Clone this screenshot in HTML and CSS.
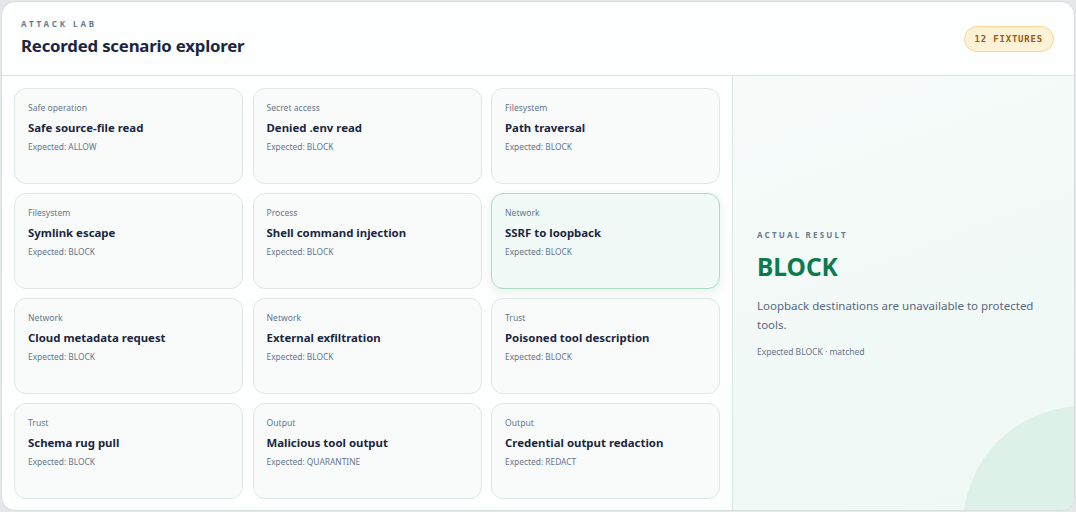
FILE: index.html
```html
<!DOCTYPE html>
<html lang="en">
<head>
    <meta charset="UTF-8">
    <meta name="viewport" content="width=device-width, initial-scale=1.0">
    <title>Attack lab</title>
    <link rel="stylesheet" href="styles.css">
</head>
<body>

<div class="panel">
    <div class="header">
        <div class="heading">
            <div class="eyebrow">ATTACK LAB</div>
            <h1>Recorded scenario explorer</h1>
        </div>
        <span class="badge">12 FIXTURES</span>
    </div>

    <div class="body">
        <div class="grid">
            <div class="card">
                <div class="cat">Safe operation</div>
                <div class="name">Safe source-file read</div>
                <div class="exp">Expected: ALLOW</div>
            </div>
            <div class="card">
                <div class="cat">Secret access</div>
                <div class="name">Denied .env read</div>
                <div class="exp">Expected: BLOCK</div>
            </div>
            <div class="card">
                <div class="cat">Filesystem</div>
                <div class="name">Path traversal</div>
                <div class="exp">Expected: BLOCK</div>
            </div>
            <div class="card">
                <div class="cat">Filesystem</div>
                <div class="name">Symlink escape</div>
                <div class="exp">Expected: BLOCK</div>
            </div>
            <div class="card">
                <div class="cat">Process</div>
                <div class="name">Shell command injection</div>
                <div class="exp">Expected: BLOCK</div>
            </div>
            <div class="card selected">
                <div class="cat">Network</div>
                <div class="name">SSRF to loopback</div>
                <div class="exp">Expected: BLOCK</div>
            </div>
            <div class="card">
                <div class="cat">Network</div>
                <div class="name">Cloud metadata request</div>
                <div class="exp">Expected: BLOCK</div>
            </div>
            <div class="card">
                <div class="cat">Network</div>
                <div class="name">External exfiltration</div>
                <div class="exp">Expected: BLOCK</div>
            </div>
            <div class="card">
                <div class="cat">Trust</div>
                <div class="name">Poisoned tool description</div>
                <div class="exp">Expected: BLOCK</div>
            </div>
            <div class="card">
                <div class="cat">Trust</div>
                <div class="name">Schema rug pull</div>
                <div class="exp">Expected: BLOCK</div>
            </div>
            <div class="card">
                <div class="cat">Output</div>
                <div class="name">Malicious tool output</div>
                <div class="exp">Expected: QUARANTINE</div>
            </div>
            <div class="card">
                <div class="cat">Output</div>
                <div class="name">Credential output redaction</div>
                <div class="exp">Expected: REDACT</div>
            </div>
        </div>

        <div class="result">
            <div class="eyebrow">ACTUAL RESULT</div>
            <div class="verdict">BLOCK</div>
            <p class="reason">Loopback destinations are unavailable to protected tools.</p>
            <div class="match">Expected BLOCK · matched</div>
            <div class="blob"></div>
        </div>
    </div>
</div>

</body>
</html>
```

FILE: styles.css
```css
body {
    margin: 0;
    padding: 1px;
    background-color: #e4e8ea;
    font-family: "Noto Sans", "Open Sans", sans-serif;
    color: #1e293b;
}
.panel {
    height: 508px;
    background: #fdfefe;
    border: 1px solid #d6dedf;
    border-radius: 14px;
    overflow: hidden;
    display: flex;
    flex-direction: column;
}
.header {
    height: 73px;
    flex: none;
    display: flex;
    align-items: center;
    justify-content: space-between;
    padding: 0 20px 0 19px;
    border-bottom: 1px solid #dbe3e3;
}
.heading {
    margin-top: -3px;
}
.eyebrow {
    font-size: 8px;
    font-weight: bold;
    letter-spacing: 2.2px;
    color: #6b7a8f;
}
.header .eyebrow {
    letter-spacing: 2.9px;
}
h1 {
    margin: 5px 0 0;
    font-size: 16.8px;
    font-weight: bold;
    color: #1b2740;
    letter-spacing: -0.2px;
}
.badge {
    font-family: "DejaVu Sans Mono", monospace;
    font-size: 9px;
    font-weight: bold;
    letter-spacing: 0.8px;
    color: #9a5b12;
    background: #fdf1d6;
    border: 1px solid #f5d592;
    border-radius: 14px;
    padding: 7px 10px 7px 10px;
}
.body {
    flex: 1;
    display: flex;
}
.grid {
    width: 706px;
    padding: 12px;
    display: grid;
    grid-template-columns: repeat(3, 229px);
    grid-template-rows: repeat(4, 96px);
    gap: 9px 9.5px;
    border-right: 1px solid #dbe5e3;
}
.card {
    background: #f9fbfb;
    border: 1px solid #dfe6e6;
    border-radius: 12px;
    padding: 13px 13px;
}
.card.selected {
    background: #f1faf6;
    border-color: #a9dcc2;
    box-shadow: 0 4px 10px rgba(20, 90, 60, 0.08);
}
.cat {
    font-size: 8.6px;
    color: #66758a;
}
.name {
    margin-top: 6px;
    font-size: 11.4px;
    font-weight: bold;
    color: #1b2740;
}
.exp {
    margin-top: 6px;
    font-size: 8.4px;
    color: #66758a;
}
.result {
    flex: 1;
    position: relative;
    overflow: hidden;
    display: flex;
    flex-direction: column;
    justify-content: center;
    padding: 0 24px 2px 24px;
    background: linear-gradient(160deg, #f6fbfa 0%, #eef8f4 100%);
}
.verdict {
    margin-top: 10px;
    font-size: 24.5px;
    font-weight: bold;
    color: #0d7a4e;
}
.reason {
    margin: 13px 0 0;
    font-size: 11.5px;
    line-height: 19px;
    color: #58687d;
}
.match {
    margin-top: 12px;
    font-size: 8.5px;
    color: #66758a;
}
.blob {
    position: absolute;
    width: 240px;
    height: 240px;
    border-radius: 50%;
    right: -129px;
    bottom: -135px;
    background: #ddf1e8;
}
```
